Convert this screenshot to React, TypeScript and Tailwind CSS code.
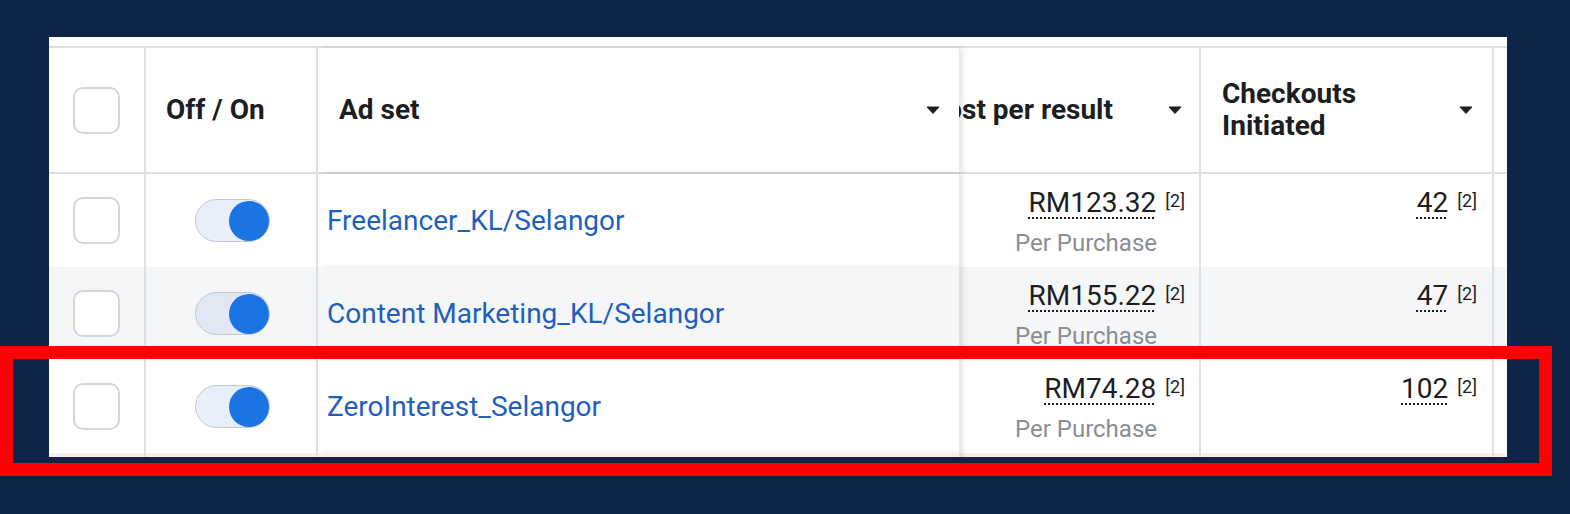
const rows = [
  { name: "Freelancer_KL/Selangor", cost: "RM123.32", checkouts: "42", bg: "bg-white", track: "bg-[#e8eefa]" },
  { name: "Content Marketing_KL/Selangor", cost: "RM155.22", checkouts: "47", bg: "bg-[#f5f6f7]", track: "bg-[#e1e8f4]" },
  { name: "ZeroInterest_Selangor", cost: "RM74.28", checkouts: "102", bg: "bg-white", track: "bg-[#e8eefa]" },
];

const Caret = () => (
  <svg width="14" height="8" viewBox="0 0 14 8" className="shrink-0">
    <path d="M1 1h12L7 7.5z" fill="#1c1e21" stroke="#1c1e21" strokeWidth="1" strokeLinejoin="round" />
  </svg>
);

const Checkbox = () => (
  <div className="h-[47px] w-[47px] rounded-[10px] border-2 border-[#d3d6db] bg-white" />
);

const Toggle = ({ track }: { track: string }) => (
  <div className={`flex h-[43px] w-[75px] items-center justify-end rounded-full border-[1.5px] border-[#c3c9d2] ${track}`}>
    <div className="h-[40px] w-[40px] rounded-full bg-[#1b74e4]" />
  </div>
);

const Value = ({ value }: { value: string }) => (
  <div className="flex items-start">
    <span className="text-[28px] leading-[40px] text-[#1c1e21] underline decoration-dotted decoration-2 underline-offset-[5px]">
      {value}
    </span>
    <span className="ml-[9px] mt-[9px] text-[18px] leading-none text-[#1c1e21]">[2]</span>
  </div>
);

const App = () => {
  return (
    <div className="relative h-[514px] w-[1570px] overflow-hidden bg-[#0c2548] pt-[37px] pl-[49px] font-[Roboto,sans-serif]">
      <div className="h-[420px] w-[1458px] overflow-hidden bg-white pt-[9px]">
        <div className="border-t-2 border-[#dcdfe3]">
          {/* header */}
          <div className="flex h-[126px] border-b-2 border-[#dcdfe3] text-[28px] font-bold text-[#1c1e21]">
            <div className="flex w-[97px] shrink-0 items-center justify-center border-r-2 border-[#dcdfe3]">
              <Checkbox />
            </div>
            <div className="flex w-[172px] shrink-0 items-center border-r-2 border-[#dcdfe3] pl-[20px]">Off / On</div>
            <div className="relative z-10 flex w-[641px] shrink-0 items-center justify-between bg-white pl-[21px] pr-[19px] shadow-[4px_0_5px_rgba(0,0,0,0.1)]">
              <span>Ad set</span>
              <Caret />
            </div>
            <div className="flex w-[242px] shrink-0 items-center justify-end gap-[55px] overflow-hidden whitespace-nowrap border-r-2 border-[#dcdfe3] pr-[17px]">
              <span>Cost per result</span>
              <Caret />
            </div>
            <div className="flex w-[293px] shrink-0 items-center justify-between border-r-2 border-[#dcdfe3] pl-[21px] pr-[19px]">
              <span className="leading-[32px]">
                Checkouts
                <br />
                Initiated
              </span>
              <Caret />
            </div>
            <div className="flex-1" />
          </div>

          {rows.map((r) => (
            <div key={r.name} className={`flex h-[93px] ${r.bg}`}>
              <div className="flex w-[97px] shrink-0 items-center justify-center border-r-2 border-[#dcdfe3]">
                <Checkbox />
              </div>
              <div className="flex w-[172px] shrink-0 items-center justify-center border-r-2 border-[#dcdfe3] pl-[2px]">
                <Toggle track={r.track} />
              </div>
              <div className={`relative z-10 flex w-[641px] shrink-0 items-center pl-[9px] text-[28px] text-[#1f5fbf] shadow-[4px_0_5px_rgba(0,0,0,0.1)] ${r.bg}`}>
                {r.name}
              </div>
              <div className="flex w-[242px] shrink-0 flex-col items-end border-r-2 border-[#dcdfe3] pr-[14px] pt-[9px]">
                <Value value={r.cost} />
                <span className="mr-[28px] text-[24px] leading-[40px] text-[#8a8d91]">Per Purchase</span>
              </div>
              <div className="flex w-[293px] shrink-0 flex-col items-end border-r-2 border-[#dcdfe3] pr-[15px] pt-[9px]">
                <Value value={r.checkouts} />
              </div>
              <div className="flex-1" />
            </div>
          ))}

          <div className="flex h-[20px] bg-[#f0f2f5]">
            <div className="w-[97px] shrink-0 border-r-2 border-[#dcdfe3]" />
            <div className="w-[172px] shrink-0 border-r-2 border-[#dcdfe3]" />
            <div className="relative z-10 w-[641px] shrink-0 bg-[#f0f2f5] shadow-[4px_0_5px_rgba(0,0,0,0.1)]" />
            <div className="w-[242px] shrink-0 border-r-2 border-[#dcdfe3]" />
            <div className="w-[293px] shrink-0 border-r-2 border-[#dcdfe3]" />
          </div>
        </div>
      </div>

      {/* highlight annotation */}
      <div className="absolute left-0 top-[346px] z-20 h-[130px] w-[1552px] border-[13px] border-[#fe0000]" />
    </div>
  );
};

export default App;
